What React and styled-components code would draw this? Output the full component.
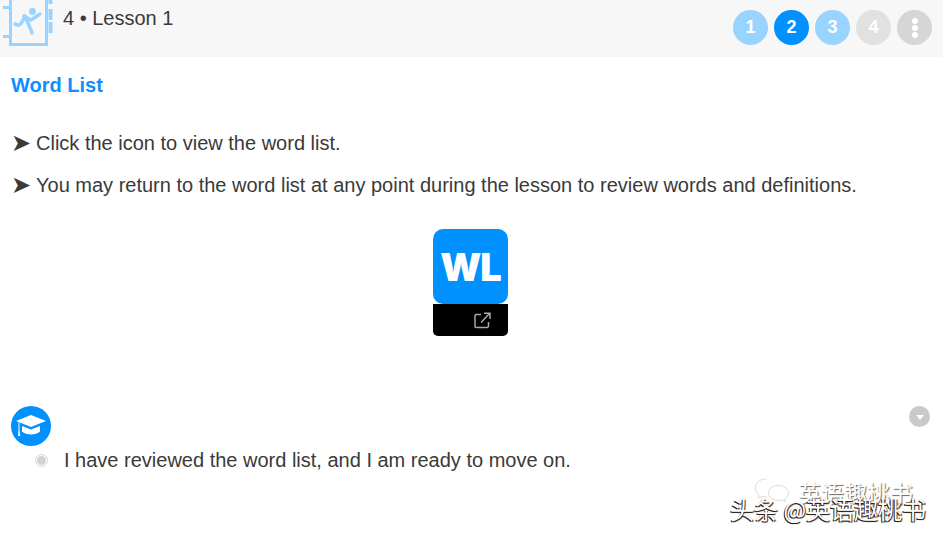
import React from 'react';
import styled, { createGlobalStyle } from 'styled-components';

const Global = createGlobalStyle`
  html, body { margin: 0; padding: 0; background: #fff; overflow: hidden; }
  body { font-family: "Liberation Sans", Arial, sans-serif; color: #333; }
`;
const Page = styled.div`
  position: relative;
  width: 943px;
  height: 537px;
  overflow: hidden;
`;
const Header = styled.header`
  height: 57px;
  background: #f7f7f7;
  display: flex;
  justify-content: space-between;
  align-items: flex-start;
  padding: 0 11px 0 3px;
  box-sizing: border-box;
`;
const TitleGroup = styled.div`
  display: flex;
  align-items: flex-start;
  gap: 7px;
`;
const LessonIcon = styled.svg`
  width: 53px;
  height: 48px;
  display: block;
`;
const Title = styled.div`
  font-size: 20px;
  line-height: 23px;
  padding-top: 7px;
  color: #3a3a3a;
`;
const Steps = styled.div`
  display: flex;
  gap: 6px;
  padding-top: 10px;
`;
const Step = styled.div`
  width: 35px;
  height: 35px;
  border-radius: 50%;
  background: ${p => p.$bg};
  color: #fff;
  font-weight: 700;
  font-size: 18px;
  display: flex;
  align-items: center;
  justify-content: center;
`;
const Dots = styled.span`
  display: flex;
  flex-direction: column;
  gap: 1px;
`;
const Dot = styled.i`
  display: block;
  width: 6px;
  height: 6px;
  border-radius: 50%;
  background: #fff;
`;
const Content = styled.main`
  padding: 17px 11px 0;
`;
const Heading = styled.h2`
  margin: 0 0 35px;
  font-size: 20px;
  line-height: 23px;
  font-weight: 700;
  color: #0f8fff;
`;
const Para = styled.p`
  margin: 0 0 19px;
  font-size: 20px;
  line-height: 23px;
  color: #3a3a3a;
`;
const Bullet = styled.span`
  display: inline-block;
  width: 25px;
  font-size: 24px;
  line-height: 0;
  vertical-align: -1px;
`;
const Center = styled.div`
  display: flex;
  justify-content: center;
  padding: 13px 2px 0 0;
`;
const WordCard = styled.div`
  width: 75px;
  display: flex;
  flex-direction: column;
`;
const WordTile = styled.div`
  height: 75px;
  background: #0091ff;
  border-radius: 10px;
  color: #fff;
  display: flex;
  align-items: center;
  justify-content: center;
  font-family: "Inter", "Liberation Sans", sans-serif;
  font-weight: 900;
  font-size: 38px;
  letter-spacing: -1px;
`;
const WordBar = styled.div`
  height: 32px;
  background: #000;
  border-radius: 0 0 5px 5px;
  display: flex;
  align-items: center;
  justify-content: flex-end;
  padding-right: 17px;
`;
const Question = styled.section`
  margin-top: 70px;
  position: relative;
`;
const Badge = styled.div`
  width: 40px;
  height: 40px;
  border-radius: 50%;
  background: #0091ff;
  display: flex;
  align-items: center;
  justify-content: center;
`;
const Collapse = styled.div`
  position: absolute;
  right: 2px;
  top: 0;
  width: 21px;
  height: 21px;
  border-radius: 50%;
  background: #c9c9c9;
  display: flex;
  align-items: center;
  justify-content: center;
`;
const Caret = styled.i`
  display: block;
  width: 0;
  height: 0;
  margin-top: 2px;
  border-left: 4px solid transparent;
  border-right: 4px solid transparent;
  border-top: 5px solid #fff;
`;
const Option = styled.div`
  display: flex;
  align-items: center;
  gap: 16px;
  padding-left: 24px;
  margin-top: 3px;
  font-size: 20px;
  line-height: 23px;
  color: #3a3a3a;
`;
const Radio = styled.span`
  width: 13px;
  height: 13px;
  box-sizing: border-box;
  border-radius: 50%;
  border: 1px solid #d5d5d5;
  display: flex;
  align-items: center;
  justify-content: center;
  &::after {
    content: "";
    width: 9px;
    height: 9px;
    border-radius: 50%;
    background: #d2d2d2;
  }
`;
const Mark = styled.div`
  position: absolute;
  font-family: "Noto Sans CJK SC", sans-serif;
  white-space: nowrap;
`;
const MarkBack = styled(Mark)`
  left: 798px;
  top: 480px;
  font-size: 23px;
  line-height: 24px;
  color: #fff;
  text-shadow: 1px 1px 1px #666;
`;
const MarkFront = styled(Mark)`
  left: 730px;
  top: 494px;
  font-size: 24px;
  line-height: 30px;
  color: #fff;
  text-shadow: -1px 1px 0 #222, 1px 1px 1px #222;
`;
const WeChat = styled.svg`
  position: absolute;
  left: 754px;
  top: 478px;
  width: 38px;
  height: 30px;
`;

const steps = [
  ['1', '#99d3ff'],
  ['2', '#0091ff'],
  ['3', '#99d3ff'],
  ['4', '#e1e1e1'],
];

export default function App() {
  return (
    <Page>
      <Global />
      <Header>
        <TitleGroup>
          <LessonIcon viewBox="0 0 53 48" fill="none">
            <g stroke="#99d3ff" strokeWidth="3">
              <path d="M7.500 0V44.500H43.500V0" />
              <path d="M0 7.500H6M0 36.500H6" />
            </g>
            <g fill="#99d3ff">
              <rect x="45.500" y="0" width="4" height="4" />
              <rect x="45.500" y="9" width="4" height="11" />
              <rect x="45.500" y="22" width="4" height="11" />
            </g>
            <circle cx="29.500" cy="11.500" r="3.400" fill="#99d3ff" />
            <path d="M12 24C15 26 18 25 19 22L22 16M21 16L28 20L37 14M22 16L25 23C26 26 28 29 29 33" stroke="#99d3ff" strokeWidth="3.400" strokeLinecap="round" strokeLinejoin="round" />
          </LessonIcon>
          <Title>4 • Lesson 1</Title>
        </TitleGroup>
        <Steps>
          {steps.map(([n, bg]) => <Step key={n} $bg={bg}>{n}</Step>)}
          <Step $bg="#d6d6d6"><Dots><Dot /><Dot /><Dot /></Dots></Step>
        </Steps>
      </Header>
      <Content>
        <Heading>Word List</Heading>
        <Para><Bullet>➤</Bullet>Click the icon to view the word list.</Para>
        <Para><Bullet>➤</Bullet>You may return to the word list at any point during the lesson to review words and definitions.</Para>
        <Center>
          <WordCard>
            <WordTile>WL</WordTile>
            <WordBar>
              <svg width="17" height="17" viewBox="0 0 17 17" fill="none" stroke="#a8a8a8" strokeWidth="1.500">
                <path d="M7 2.500H2.500a1.500 1.500 0 0 0-1.500 1.500V14.500a1.500 1.500 0 0 0 1.500 1h10.500a1.500 1.500 0 0 0 1.500-1.500V10" />
                <path d="M7 10.500 15.500 1.500M10 1.200H16V7" />
              </svg>
            </WordBar>
          </WordCard>
        </Center>
        <Question>
          <Badge>
            <svg width="32" height="26" viewBox="0 0 32 26" fill="#fff">
              <path d="M16 2 31 8 16 14 1 8Z" />
              <path d="M7 13 16 16.500 25 13V18.500C23 20.500 19.500 21.500 16 21.500S9 20.500 7 18.500Z" />
              <path d="M3.500 9.500h1V17l.8 6H3l.5-6Z" />
            </svg>
          </Badge>
          <Collapse><Caret /></Collapse>
          <Option>
            <Radio />
            I have reviewed the word list, and I am ready to move on.
          </Option>
        </Question>
      </Content>
      <WeChat viewBox="0 0 40 32" fill="none" stroke="#d9d9d9" strokeWidth="1">
        <path d="M13 1C6 1 1 5 1 10.500c0 3 1.500 5.500 4 7.500l-1 3.500 4-2c1.500.5 3 .8 5 .8" />
        <path d="M26 8C20 8 15 11.500 15 16s5 8 11 8c1.500 0 3-.2 4-.6l3.500 2-1-3c2.500-1.500 4-4 4-6.400 0-4.500-5-8-10.500-8Z" />
      </WeChat>
      <MarkBack>英语趣桃书</MarkBack>
      <MarkFront>头条 @英语趣桃书</MarkFront>
    </Page>
  );
}
